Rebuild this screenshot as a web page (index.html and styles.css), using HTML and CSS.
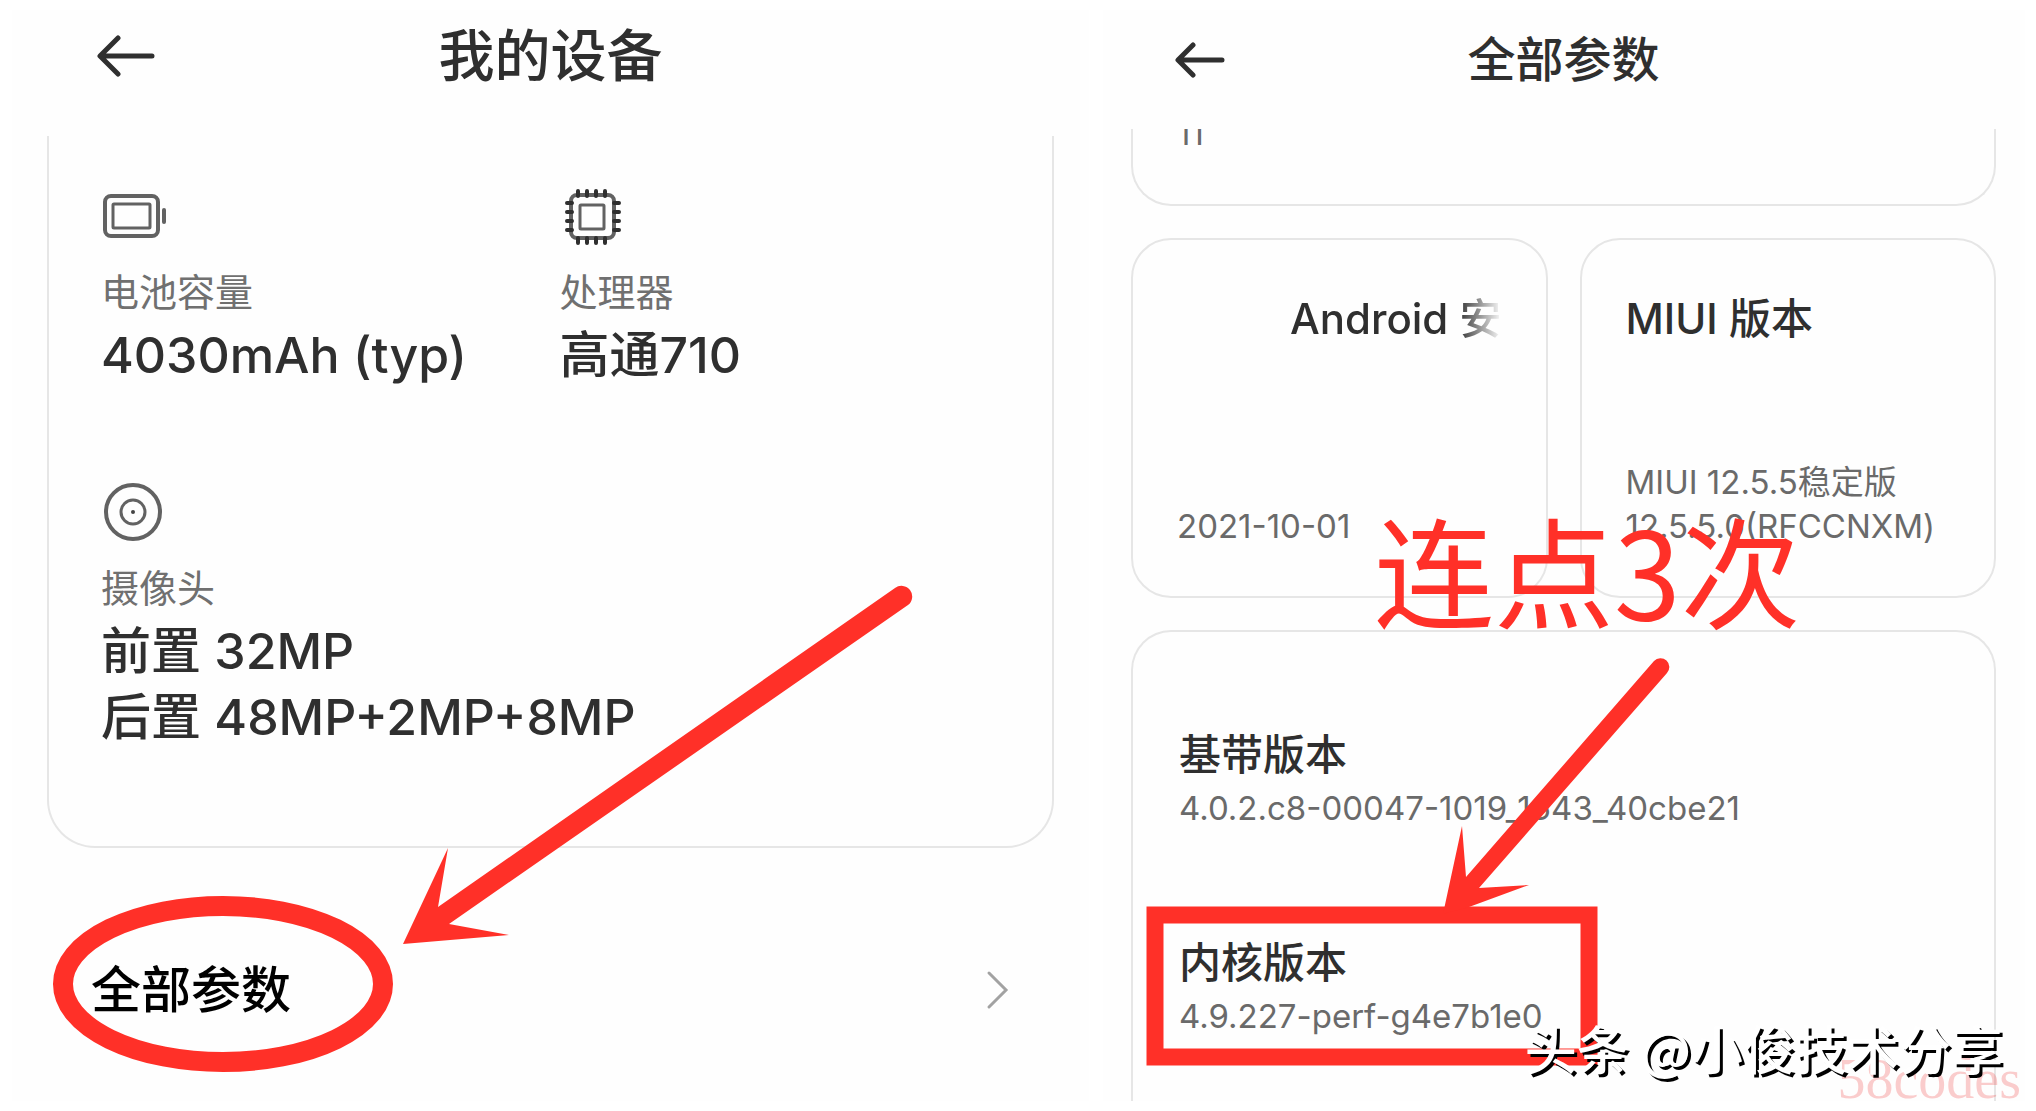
FILE: index.html
```html
<!DOCTYPE html>
<html lang="zh-CN">
<head>
<meta charset="utf-8">
<title>我的设备 / 全部参数</title>
<link rel="stylesheet" href="styles.css">
</head>
<body>
<main class="screens">
  <section class="panel device">
    <header class="bar">
      <button class="back" type="button" aria-label="返回">
        <svg width="58" height="42" viewBox="0 0 58 42"><path d="M21 3 3 21l18 18M4 21h51"/></svg>
      </button>
      <h1 class="title">我的设备</h1>
    </header>
    <div class="card specs">
      <div class="spec">
        <svg class="icon" width="66" height="60" viewBox="0 0 66 60"><rect x="4" y="10" width="53" height="40" rx="6" stroke-width="4"/><rect x="12" y="18" width="37" height="24" rx="1" stroke-width="3"/><path d="M63 24v12" stroke-width="4"/></svg>
        <p class="label">电池容量</p>
        <p class="value">4030mAh (typ)</p>
      </div>
      <div class="spec">
        <svg class="icon" width="66" height="60" viewBox="0 0 66 60"><rect x="11" y="9" width="43" height="43" rx="6" stroke-width="4"/><rect x="20" y="19" width="24" height="24" rx="1" stroke-width="3"/><path class="pins" d="M18 5v5M27 5v5M36 5v5M45 5v5M18 52v5M27 52v5M36 52v5M45 52v5M7 17h5M7 26h5M7 35h5M7 44h5M54 17h5M54 26h5M54 35h5M54 44h5"/></svg>
        <p class="label">处理器</p>
        <p class="value">高通710</p>
      </div>
      <div class="spec">
        <svg class="icon" width="66" height="60" viewBox="0 0 66 60"><circle cx="32" cy="30" r="27" stroke-width="4"/><circle cx="32" cy="30" r="12" stroke-width="3"/><circle class="dot" cx="32" cy="30" r="2"/></svg>
        <p class="label">摄像头</p>
        <p class="value">前置 32MP<br>后置 48MP+2MP+8MP</p>
      </div>
    </div>
    <a class="more" href="#all">全部参数
      <svg width="24" height="40" viewBox="0 0 24 40"><path d="M3 3l17 17L3 37"/></svg>
    </a>
    <svg class="marks" aria-hidden="true">
      <ellipse cx="211" cy="974" rx="160" ry="78" stroke-width="20"/>
      <path class="solid" d="M391 934 436 838 426 897 883 578A10 10 0 0 1 896 595L437 914 497 925Z"/>
    </svg>
  </section>

  <section class="panel params" id="all">
    <header class="bar">
      <button class="back" type="button" aria-label="返回">
        <svg width="50" height="36" viewBox="0 0 50 36"><path d="M18 3 3 18l15 15M4 18h43"/></svg>
      </button>
      <h1 class="title">全部参数</h1>
    </header>
    <div class="card cut"><p class="note">11</p></div>
    <div class="pair">
      <div class="card version">
        <h2 class="name scrolling">Android 安</h2>
        <p class="note">2021-10-01</p>
      </div>
      <div class="card version">
        <h2 class="name">MIUI 版本</h2>
        <p class="note">MIUI 12.5.5稳定版<br>12.5.5.0(RFCCNXM)</p>
      </div>
    </div>
    <div class="card builds">
      <div>
        <h2 class="name">基带版本</h2>
        <p class="note">4.0.2.c8-00047-1019_1643_40cbe21</p>
      </div>
      <div>
        <h2 class="name">内核版本</h2>
        <p class="note">4.9.227-perf-g4e7b1e0</p>
      </div>
    </div>
    <svg class="marks" aria-hidden="true">
      <rect x="52" y="905" width="434" height="142" stroke-width="17"/>
      <path class="solid" d="M340 904 359 816 363 867 551 651A8 8 0 0 1 564 663L376 878 426 875 366 897Z"/>
    </svg>
    <p class="callout">连点3次</p>
    <p class="site">58codes</p>
    <p class="author">头条 @小俊技术分享</p>
  </section>
</main>
</body>
</html>
```
FILE: styles.css
```css
* { box-sizing: border-box; }

body {
  margin: 0;
  background: #fff;
  color: #2f2f2f;
  font-family: Inter, "Noto Sans CJK SC", sans-serif;
}

h1, h2, p { margin: 0; font-weight: 400; }

.screens {
  display: grid;
  grid-template-columns: 1077fr 922fr;
  gap: 14px;
  min-height: 100vh;
  padding: 10px 11px 10px 12px;
}

.panel {
  position: relative;
  display: flex;
  flex-direction: column;
  background: #fefefe;
}

.device { padding: 0 35px; }
.params { padding: 0 29px 0 28px; }

/* title bars */
.bar {
  display: grid;
  grid-template-columns: 1fr auto 1fr;
  align-items: center;
}
.device .bar { height: 126px; padding: 0 50px 34px; }
.params .bar { height: 119px; padding: 0 44px 20px; }

.back {
  justify-self: start;
  display: flex;
  padding: 0;
  border: 0;
  background: none;
}
.back svg {
  fill: none;
  stroke: #2f2f2f;
  stroke-width: 5;
  stroke-linecap: round;
  stroke-linejoin: round;
}

.title { font-weight: 500; line-height: 70px; }
.device .title { font-size: 56px; }
.params .title { font-size: 48px; }

.card {
  border: 2px solid #e6e6e6;
  border-radius: 40px;
}

/* device summary */
.specs {
  display: grid;
  grid-template-columns: 1fr 1fr;
  row-gap: 94px;
  padding: 50px 34px 96px 52px;
  border-top: 0;
  border-radius: 0 0 48px 48px;
}
.spec:last-child { grid-column: 1 / -1; }

.icon {
  display: block;
  fill: none;
  stroke: #626262;
  stroke-linecap: round;
}
.pins { stroke: #2f2f2f; stroke-width: 4; }
.dot { fill: #444; stroke: none; }

.label {
  margin-top: 24px;
  color: #707070;
  font-size: 38px;
  line-height: 44px;
}
.value {
  margin-top: 8px;
  font-size: 50px;
  font-weight: 500;
  line-height: 66px;
}

.more {
  display: flex;
  align-items: center;
  justify-content: space-between;
  margin-top: 100px;
  padding: 0 44px;
  color: #000;
  font-size: 50px;
  font-weight: 500;
  line-height: 84px;
  text-decoration: none;
}
.more svg {
  fill: none;
  stroke: #a2a2a2;
  stroke-width: 3;
  stroke-linecap: round;
}

/* parameter cards */
.name { font-size: 42px; font-weight: 500; line-height: 62px; }
.note { color: #6a6a6a; font-size: 33px; line-height: 44px; }

.cut {
  height: 77px;
  padding-left: 44px;
  overflow: hidden;
  border-top: 0;
  border-radius: 0 0 40px 40px;
}
.cut .note { margin-top: -18px; }

.pair {
  display: grid;
  grid-template-columns: 1fr 1fr;
  gap: 32px;
  margin: 32px 0;
}
.version {
  display: flex;
  flex-direction: column;
  justify-content: space-between;
  min-height: 360px;
  padding: 48px 44px;
}
.scrolling {
  overflow: hidden;
  text-align: right;
  white-space: nowrap;
  -webkit-mask-image: linear-gradient(to left, transparent, #000 44px);
  mask-image: linear-gradient(to left, transparent, #000 44px);
}
.builds {
  flex: 1;
  display: flex;
  flex-direction: column;
  gap: 102px;
  padding: 92px 46px 60px;
  border-bottom: 0;
  border-radius: 40px 40px 0 0;
}

/* annotations drawn over the screens */
.marks {
  position: absolute;
  inset: 0;
  width: 100%;
  height: 100%;
  fill: none;
  stroke: #ff3028;
  pointer-events: none;
}
.marks .solid { fill: #ff3028; stroke: none; }

.callout {
  position: absolute;
  top: 488px;
  left: 271px;
  color: #ff3028;
  font-family: "Noto Sans CJK SC", sans-serif;
  font-size: 120px;
  line-height: 140px;
}
.author {
  position: absolute;
  right: 22px;
  bottom: 23px;
  color: #fff;
  font-family: "Noto Sans CJK SC", sans-serif;
  font-size: 52px;
  font-weight: 500;
  line-height: 60px;
  text-shadow: 3px 3px 0 #000;
  white-space: nowrap;
}
.site {
  position: absolute;
  right: 4px;
  bottom: -6px;
  color: rgba(240, 60, 60, .26);
  font-family: "Liberation Serif", serif;
  font-size: 56px;
  line-height: 56px;
}
```
